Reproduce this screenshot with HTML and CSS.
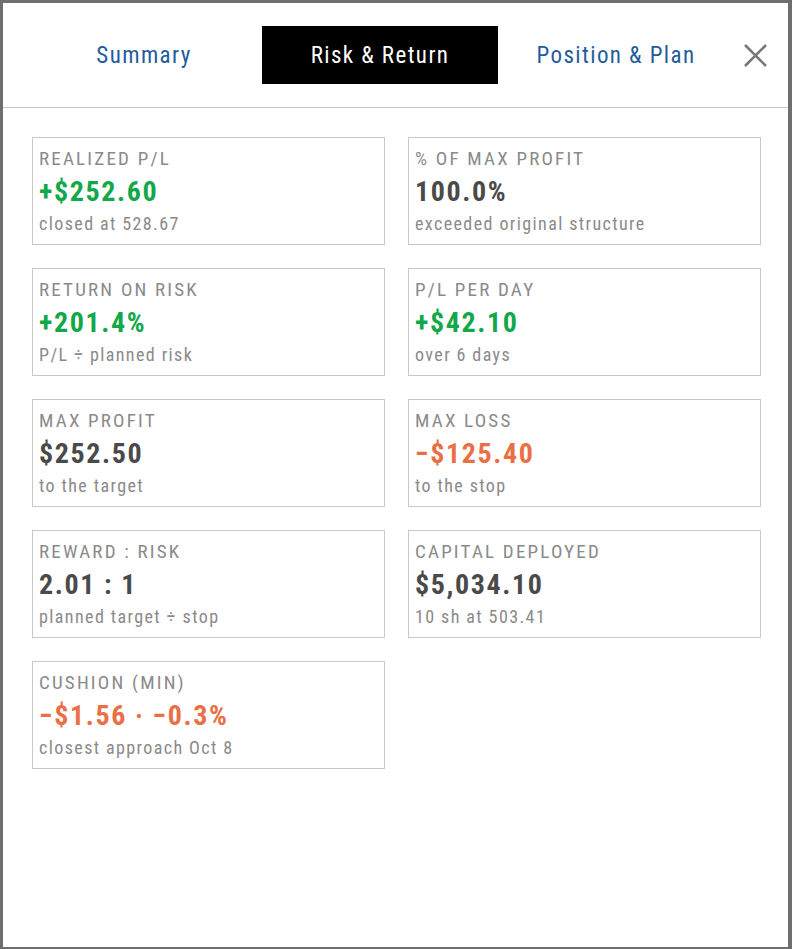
FILE: index.html
```html
<!DOCTYPE html>
<html lang="en">
<head>
<meta charset="utf-8">
<title>Risk &amp; Return</title>
<link rel="stylesheet" href="styles.css">
</head>
<body>
<div class="modal">
  <div class="header">
    <div class="tabs">
      <div class="tab">Summary</div>
      <div class="tab active">Risk &amp; Return</div>
      <div class="tab">Position &amp; Plan</div>
    </div>
    <button class="close" aria-label="Close">
      <svg width="23" height="23" viewBox="0 0 23 23"><path d="M1 1 L22 22 M22 1 L1 22" stroke="#777" stroke-width="2.6" fill="none"/></svg>
    </button>
  </div>
  <div class="grid">
    <div class="card">
      <div class="label">REALIZED P/L</div>
      <div class="value green">+$252.60</div>
      <div class="sub">closed at 528.67</div>
    </div>
    <div class="card">
      <div class="label">% OF MAX PROFIT</div>
      <div class="value">100.0%</div>
      <div class="sub">exceeded original structure</div>
    </div>
    <div class="card">
      <div class="label">RETURN ON RISK</div>
      <div class="value green">+201.4%</div>
      <div class="sub">P/L ÷ planned risk</div>
    </div>
    <div class="card">
      <div class="label">P/L PER DAY</div>
      <div class="value green">+$42.10</div>
      <div class="sub">over 6 days</div>
    </div>
    <div class="card">
      <div class="label">MAX PROFIT</div>
      <div class="value">$252.50</div>
      <div class="sub">to the target</div>
    </div>
    <div class="card">
      <div class="label">MAX LOSS</div>
      <div class="value orange">−$125.40</div>
      <div class="sub">to the stop</div>
    </div>
    <div class="card">
      <div class="label">REWARD : RISK</div>
      <div class="value">2.01 : 1</div>
      <div class="sub">planned target ÷ stop</div>
    </div>
    <div class="card">
      <div class="label">CAPITAL DEPLOYED</div>
      <div class="value">$5,034.10</div>
      <div class="sub">10 sh at 503.41</div>
    </div>
    <div class="card">
      <div class="label">CUSHION (MIN)</div>
      <div class="value orange">−$1.56 · −0.3%</div>
      <div class="sub">closest approach Oct 8</div>
    </div>
  </div>
</div>
</body>
</html>
```
FILE: styles.css
```css
html, body {
  margin: 0;
  padding: 0;
  height: 100%;
}
body {
  background: #6e6e6e;
  font-family: "Roboto Condensed", Roboto, "Liberation Sans", sans-serif;
  padding: 3px 4px 2px 3px;
  box-sizing: border-box;
}
.modal {
  background: #fff;
  height: 944px;
  box-sizing: border-box;
}
.header {
  display: flex;
  align-items: center;
  padding: 23px 0 23px 23px;
  border-bottom: 1px solid #c8c8c8;
}
.tabs {
  display: flex;
}
.tab {
  width: 236px;
  height: 58px;
  display: flex;
  align-items: center;
  justify-content: center;
  font-size: 23px;
  letter-spacing: 1.4px;
  color: #1f5c9b;
}
.tab.active {
  background: #000;
  color: #fff;
}
.close {
  border: 0;
  background: none;
  padding: 0;
  margin-left: 10px;
  width: 23px;
  height: 23px;
  display: flex;
  cursor: pointer;
}
.grid {
  display: grid;
  grid-template-columns: 353px 353px;
  column-gap: 23px;
  row-gap: 23px;
  padding: 29px 0 0 29px;
}
.card {
  border: 1px solid #c8c8c8;
  height: 108px;
  box-sizing: border-box;
  padding: 10px 6px 0;
}
.label {
  font-size: 19px;
  line-height: 22px;
  letter-spacing: 2.2px;
  color: #8a8a8a;
}
.value {
  font-size: 28px;
  line-height: 34px;
  font-weight: 700;
  letter-spacing: 1.6px;
  color: #4a4a4a;
  margin-top: 5px;
}
.value.green { color: #12a84a; }
.value.orange { color: #ea6f45; }
.sub {
  font-size: 18px;
  line-height: 28px;
  letter-spacing: 1.4px;
  color: #8a8a8a;
  margin-top: 1px;
}
```
